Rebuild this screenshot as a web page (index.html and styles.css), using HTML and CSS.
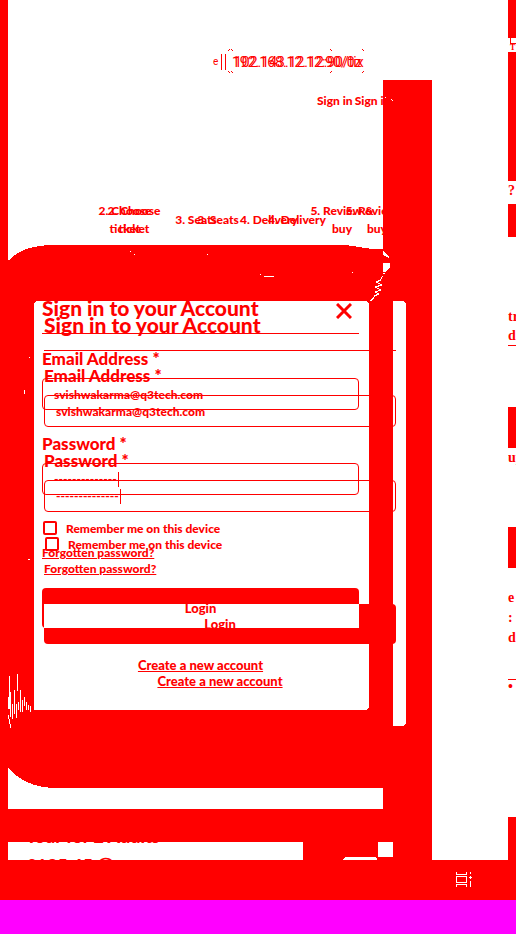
FILE: index.html
```html
<!DOCTYPE html>
<html lang="en">
<head>
<meta charset="utf-8">
<title>Sign in</title>
<link rel="stylesheet" href="styles.css">
</head>
<body>
<div class="page">
  <div class="stage">
    <svg class="backdrop" width="516" height="860" viewBox="0 0 516 860" shape-rendering="crispEdges" aria-hidden="true">
      <path fill="#f00" d="M0 0H8V261Q22 245 55 245H345Q360 247 372 249H383V80H432V860H0Z"/>
      <path fill="#fff" d="M8 767Q24 788 58 788H383V809H8ZM8 842H303V860H8ZM378 842H393V857H378ZM343 860Q343 857 348 857H375Q377 857 377 860Z"/>
      <path fill="#fff" d="M38 301H365Q369 301 369 305V706Q369 710 365 710H34V305Q34 301 38 301ZM393 301H402Q406 301 406 305V722Q406 726 402 726H393ZM383 263H390V267L386 272H383ZM383 251L389 257V258L383 255Z"/>
      <path fill="none" stroke="#fff" d="M130 251.500h1M134 254.500h1M207 254.500h1M260 274.500h1M264 276.500h10M352 272.500h1M385 97.500h1M391 99.500h1M392 100.500h1M24.500 390v4M29.500 357v1M28 559h2M383 273h2M382.500 276l-2 4-4 2 5 3-6 2 5 3-5 2 3 2-4 2-1 2-3 3"/>
      <path fill="none" stroke="#fff" d="M9.500 676v33M17.500 674v17M8.500 697v12M10.500 692v25M12.500 704v15M14.500 690v24M16.500 704v14M18.500 702v8M20.500 690v22M22.500 700v12M24.500 697v9M26.500 702v8M28.500 705v5M30.500 706v6M8 715l3 13"/>
      <path fill="none" stroke="#f00" d="M228 50.500h1M229 49.500h1M231 49.500h1M232 50.500h1M330 49.500h1M331 50.500h1M362 49.500h1M363 50.500h1M228 71.500h1M229 72.500h1M231 71.500h1M232 72.500h1M330 72.500h1M331 71.500h1M362 72.500h1M363 71.500h1"/>
    </svg>
    <main class="main">
      <header class="top">
        <div class="address">
          <span class="lead">e</span>
          <span class="bars"></span>
          <span class="hosts"><span>192.168.12.12:90/0z</span><span class="second">102.143.12.12:90/tix</span></span>
        </div>
        <nav class="account"><a href="#login">Sign in</a><a href="#login">Sign in</a></nav>
        <div class="step-layers">
          <ol class="steps"><li>2. Choose<br>ticket</li><li>3. Seats</li><li>4. Delivery</li><li>5. Review &amp;<br>buy</li></ol>
          <ol class="steps steps-b"><li>2. Choose<br>ticket</li><li>3. Seats</li><li>4. Delivery</li><li>5. Review &amp;<br>buy</li></ol>
        </div>
      </header>
      <section class="dialogs">
        <form class="dialog" id="login">
          <div class="heading"><h1>Sign in to your Account</h1><button class="close" type="button" aria-label="Close"><svg width="16" height="16" viewBox="0 0 16 16"><path d="M1 1L15 15M15 1L1 15"/></svg></button></div>
          <label class="label" for="email-a">Email Address *</label>
          <input class="field" id="email-a" type="email" value="svishwakarma@q3tech.com">
          <label class="label" for="pass-a">Password *</label>
          <div class="field password"><input id="pass-a" type="text" value="--------------"><span class="caret"></span></div>
          <label class="remember"><input type="checkbox">Remember me on this device</label>
          <a class="forgot" href="#login">Forgotten password?</a>
          <button class="login login-a" type="button">Login</button>
          <a class="create" href="#login">Create a new account</a>
        </form>
        <form class="dialog dialog-b">
          <div class="heading"><h1>Sign in to your Account</h1></div>
          <label class="label" for="email-b">Email Address *</label>
          <input class="field" id="email-b" type="email" value="svishwakarma@q3tech.com">
          <label class="label" for="pass-b">Password *</label>
          <div class="field password"><input id="pass-b" type="text" value="--------------"><span class="caret"></span></div>
          <label class="remember"><input type="checkbox">Remember me on this device</label>
          <a class="forgot" href="#login">Forgotten password?</a>
          <button class="login login-b" type="button">Login</button>
          <a class="create" href="#login">Create a new account</a>
        </form>
      </section>
      <section class="summary"><p>Tour for 2 Adults</p><p>£125.45 ⓘ</p></section>
    </main>
    <aside class="rail">
      <div class="block b1"></div>
      <div class="gap g1"><span>T</span></div>
      <div class="block b2"></div>
      <div class="gap g2"><span>?</span></div>
      <div class="block b3"></div>
      <div class="gap g3"><span>tr</span><span class="ruled">d</span></div>
      <div class="block b4"></div>
      <div class="gap g4"><span>up</span></div>
      <div class="block b4"></div>
      <div class="gap g5"><span>e</span><span>:</span><span>d</span><span class="dot">•</span></div>
      <div class="block b5"></div>
    </aside>
  </div>
  <div class="bar"><svg width="18" height="16" viewBox="0 0 18 16" shape-rendering="crispEdges"><path d="M.5 0v2.500h10V0M0 4.500h11M.5 4v7M10.500 4v7M0 10.500h11M.5 15v-2.500h10V15M14.500 0v2M14.500 4v3M13 5.500h3M14.500 9v6"/></svg></div>
  <footer class="footer"></footer>
</div>
</body>
</html>
```
FILE: styles.css
```css
* { box-sizing: border-box; }
body { margin: 0; background: #fff; color: #f00; font-family: Lato, "Liberation Sans", sans-serif; }
h1, p, ol { margin: 0; padding: 0; }
a { color: inherit; }
.page { display: flex; flex-direction: column; min-height: 100vh; }
.stage { position: relative; display: flex; overflow: hidden; }
.backdrop { position: absolute; left: 0; top: 0; }
.main { position: relative; flex: 1; min-width: 0; height: 860px; overflow: hidden; }
.top { height: 301px; padding-top: 50px; }
.address { display: flex; align-items: center; height: 24px; padding-left: 213px; font: 14px/24px Roboto, sans-serif; }
.lead { width: 8px; overflow: hidden; font-size: 10px; }
.bars { width: 5px; height: 16px; border: solid #f00; border-width: 0 1px; }
.hosts { display: grid; margin-left: 6px; }
.hosts span { grid-area: 1 / 1; white-space: nowrap; }
.hosts .second { padding-left: 2px; }
.account { display: flex; gap: 2px; height: 24px; margin-top: 15px; padding-left: 317px; font-size: 12px; font-weight: 900; line-height: 24px; white-space: nowrap; }
.account a { text-decoration: none; }
.step-layers { display: grid; margin-top: 89px; font-size: 12px; font-weight: 900; line-height: 18px; }
.steps { grid-area: 1 / 1; display: grid; grid-template-columns: 66px 60px 70px 60px; justify-content: start; justify-items: center; column-gap: 8px; padding-left: 92px; align-items: center; text-align: center; list-style: none; white-space: nowrap; }
.steps-b { grid-template-columns: 64px 88px 54px 90px; padding-left: 102px; }
.dialogs { display: grid; height: 516px; }
.dialog { grid-area: 1 / 1; display: flex; flex-direction: column; width: 317px; margin-left: 42px; }
.dialog-b { width: 352px; margin-left: 44px; padding-top: 17px; }
.heading { display: flex; justify-content: space-between; height: 33px; border-bottom: 1px solid #f00; }
h1 { font-size: 21px; font-weight: 900; line-height: 14px; white-space: nowrap; }
.close { width: 16px; height: 16px; margin: 2px 7px 0 0; padding: 0; border: 0; background: none; }
.close svg { display: block; fill: none; stroke: #f00; stroke-width: 3px; }
.label { height: 29px; margin-top: 15px; font-size: 17px; font-weight: 900; line-height: 20px; }
.field { height: 32px; padding: 0 11px; border: 1px solid #f00; border-radius: 4px; background: none; color: #f00; font: 900 12px/30px Lato, sans-serif; }
.field + .label { margin-top: 24px; }
.password { display: flex; align-items: center; }
.password input { width: 64px; padding: 0; border: 0; background: none; color: #f00; font: 900 12px/30px Lato, sans-serif; }
.caret { width: 1px; height: 15px; background: #f00; }
.remember { display: flex; align-items: center; gap: 9px; height: 16px; margin-top: 25px; font-size: 12px; font-weight: 900; white-space: nowrap; }
.remember input { appearance: none; width: 14px; height: 14px; margin: 0 0 0 1px; border: 2px solid #f00; border-radius: 2px; }
.forgot { align-self: flex-start; margin-top: 9px; font-size: 12px; font-weight: 900; line-height: 16px; }
.login { height: 40px; margin-top: 27px; padding: 0; border: 0; border-radius: 4px; color: #f00; font: 900 13px/40px Lato, sans-serif; }
.login-a { background: linear-gradient(#f00, #f00) 0 0 / 100% 16px no-repeat, linear-gradient(#f00, #f00) 0 0 / 2px 100% no-repeat; background-color: #fff; }
.login-b { background: linear-gradient(#f00, #f00) 0 100% / 100% 16px no-repeat, linear-gradient(#f00, #f00) 100% 0 / 37px 100% no-repeat; }
.create { align-self: center; margin-top: 29px; font-size: 13px; font-weight: 900; line-height: 16px; }
.dialog-b .remember { margin-top: 24px; }
.summary { padding: 4px 0 0 26px; font-size: 18px; font-weight: 900; line-height: 30px; }
.rail { position: relative; flex: 0 0 8px; height: 860px; overflow: hidden; background: #fff; font: 700 14px/20px "Liberation Serif", serif; }
.block { background: #f00; }
.gap { display: flex; flex-direction: column; overflow: hidden; }
.gap span { white-space: nowrap; }
.b1 { height: 38px; }
.g1 { height: 14px; padding: 0 0 0 2px; font-size: 8px; line-height: 8px; }
.g1::before { content: ""; width: 1px; height: 5px; background: #f00; }
.g1 span { border-top: 1px solid #f00; }
.b2 { height: 129px; }
.g2 { height: 23px; }
.b3 { height: 33px; }
.g3 { height: 170px; padding-top: 70px; }
.ruled { height: 19px; border-bottom: 1px solid #f00; line-height: 18px; }
.b4 { height: 41px; }
.g4 { height: 79px; }
.g5 { height: 249px; padding-top: 20px; }
.dot { margin-top: 31px; border-top: 1px solid #f00; line-height: 14px; }
.b5 { height: 43px; }
.bar { display: flex; height: 40px; padding: 12px 42px 0 0; justify-content: flex-end; background: #f00; }
.bar svg { fill: none; stroke: #fff; }
.footer { flex: 1; min-height: 34px; background: #f0f; }
```
